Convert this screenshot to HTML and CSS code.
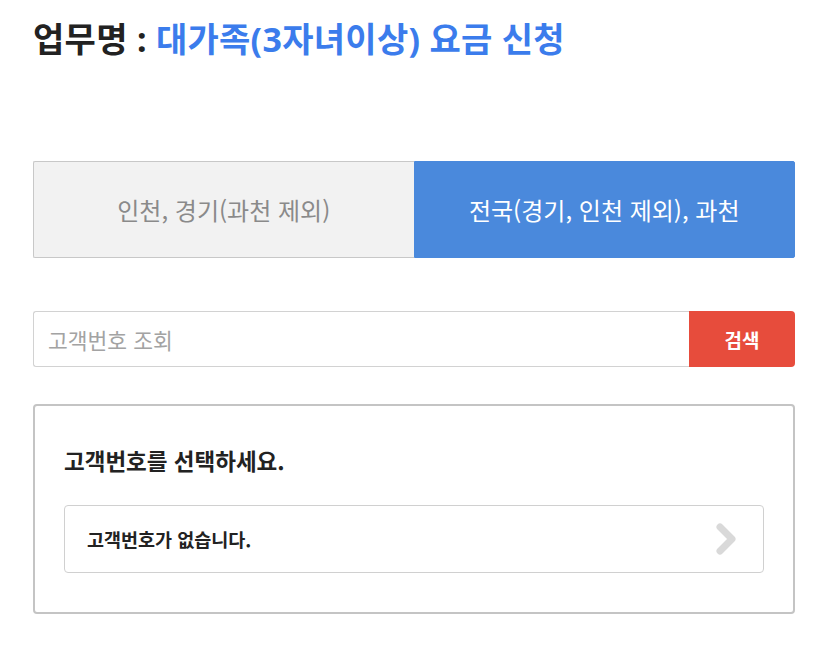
FILE: index.html
```html
<!DOCTYPE html>
<html lang="ko">
<head>
<meta charset="utf-8">
<link rel="stylesheet" href="styles.css">
</head>
<body>
<div class="page">
  <h1 class="title">업무명 : <span class="title-name">대가족(3자녀이상) 요금 신청</span></h1>
  <div class="tabs">
    <div class="tab">인천, 경기(과천 제외)</div>
    <div class="tab tab-active">전국(경기, 인천 제외), 과천</div>
  </div>
  <div class="search">
    <div class="search-input">고객번호 조회</div>
    <div class="search-btn">검색</div>
  </div>
  <div class="panel">
    <div class="panel-title">고객번호를 선택하세요.</div>
    <div class="item">
      <span class="item-text">고객번호가 없습니다.</span>
      <svg class="chev" width="24" height="32" viewBox="0 0 24 32"><path d="M5 4 L17 16 L5 28" fill="none" stroke="#d9d9d9" stroke-width="7" stroke-linecap="round" stroke-linejoin="round"/></svg>
    </div>
  </div>
</div>
</body>
</html>
```
FILE: styles.css
```css
* { box-sizing: border-box; }
body {
  margin: 0;
  background: #fff;
  font-family: "Noto Sans CJK KR", "Noto Sans", sans-serif;
  color: #222;
}
.page {
  padding: 16px 33px 0 33px;
}
.title {
  margin: 0;
  font-family: "Noto Sans", "Noto Sans CJK KR", sans-serif;
  font-size: 34px;
  font-weight: 700;
  line-height: 46px;
  color: #222;
  letter-spacing: 0.3px;
}
.title-name { color: #3b7cec; }
.tabs {
  margin-top: 99px;
  display: flex;
  height: 97px;
}
.tab {
  flex: 1;
  display: flex;
  align-items: center;
  justify-content: center;
  font-size: 24px;
  color: #8a8a8a;
  background: #f2f2f2;
  border: 1px solid #c8c8c8;
  border-right: none;
  border-radius: 2px 0 0 2px;
}
.tab-active {
  background: #4a89dc;
  color: #fff;
  border: 1px solid #4a89dc;
  border-radius: 0 2px 2px 0;
}
.search {
  margin-top: 53px;
  display: flex;
  height: 56px;
}
.search-input {
  flex: 1;
  border: 1px solid #d2d2d2;
  border-right: none;
  border-radius: 3px 0 0 3px;
  padding-left: 14px;
  display: flex;
  align-items: center;
  font-size: 21.5px;
  color: #a3a3a3;
}
.search-btn {
  width: 106px;
  background: #e74c3c;
  color: #fff;
  font-size: 19px;
  font-weight: 700;
  display: flex;
  align-items: center;
  justify-content: center;
  border-radius: 0 4px 4px 0;
}
.panel {
  margin-top: 37px;
  border: 2px solid #c4c4c4;
  border-radius: 4px;
  padding: 39px 29px 39px 29px;
}
.panel-title {
  font-size: 22.5px;
  font-weight: 700;
  color: #222;
  line-height: 30px;
}
.item {
  margin-top: 30px;
  height: 68px;
  border: 1px solid #d0d0d0;
  border-radius: 4px;
  display: flex;
  align-items: center;
  justify-content: space-between;
  padding: 0 24px 0 22px;
}
.item-text {
  font-size: 18.5px;
  font-weight: 700;
  color: #222;
}
.chev { display: block; }
```
